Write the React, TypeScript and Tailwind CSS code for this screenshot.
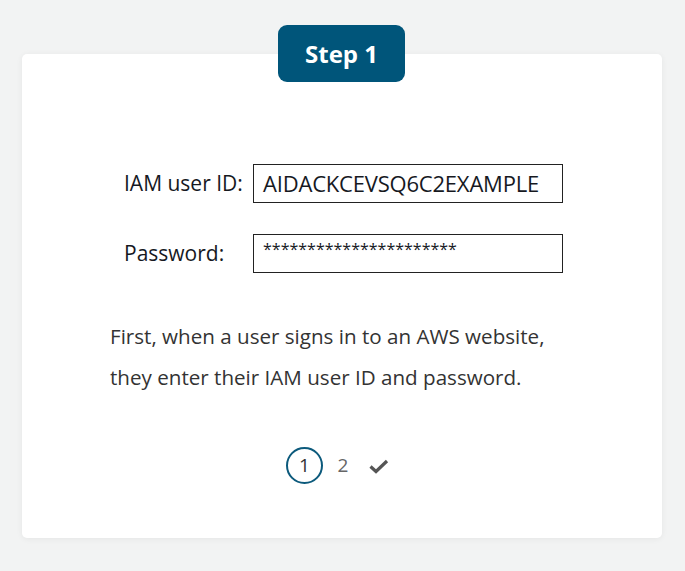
import React from "react";

export default function App() {
  return (
    <div
      className="w-[685px] h-[571px] bg-[#f2f3f3] pt-[54px] pl-[22px]"
      style={{ fontFamily: '"Open Sans", "Noto Sans", sans-serif' }}
    >
      <div className="relative w-[640px] h-[484px] bg-white rounded-[5px] shadow-[0_1px_6px_rgba(0,0,0,0.06)] flex flex-col">
        <div className="absolute left-[256px] top-[-29px] w-[127px] h-[57px] rounded-[9px] bg-[#00557a] flex items-center justify-center text-white text-[24px] font-bold">
          Step 1
        </div>
        <div className="mt-[110px] ml-[102px] flex flex-col gap-[31px]">
          <div className="flex items-center">
            <span className="w-[129px] text-[21px] text-[#16191f]">IAM user ID:</span>
            <div className="w-[310px] h-[39px] border border-[#222] flex items-center pl-[9px] text-[22px] tracking-[-0.2px] text-[#16191f]">
              AIDACKCEVSQ6C2EXAMPLE
            </div>
          </div>
          <div className="flex items-center">
            <span className="w-[129px] text-[21px] text-[#16191f]">Password:</span>
            <div className="w-[310px] h-[39px] border border-[#222] flex items-start pt-[2px] pl-[9px] text-[16px] text-[#16191f]">
              **********************
            </div>
          </div>
        </div>
        <p className="mt-[43px] ml-[88px] text-[20.6px] leading-[41px] text-[#333]">
          First, when a user signs in to an AWS website,
          <br />
          they enter their IAM user ID and password.
        </p>
        <div className="mt-[49px] flex items-center justify-center gap-[10px] ml-[-8px]">
          <div className="w-[37px] h-[37px] rounded-full border-2 border-[#0c5a7c] flex items-center justify-center text-[19px] text-[#333]">
            1
          </div>
          <span className="w-[20px] text-center text-[19px] text-[#666]">2</span>
          <svg width="22" height="20" viewBox="0 0 22 20" className="ml-[5px]">
            <path d="M2.5 10.5 L8 15.5 L19 5" fill="none" stroke="#555" strokeWidth="3.2" strokeLinejoin="miter" />
          </svg>
        </div>
      </div>
    </div>
  );
}
